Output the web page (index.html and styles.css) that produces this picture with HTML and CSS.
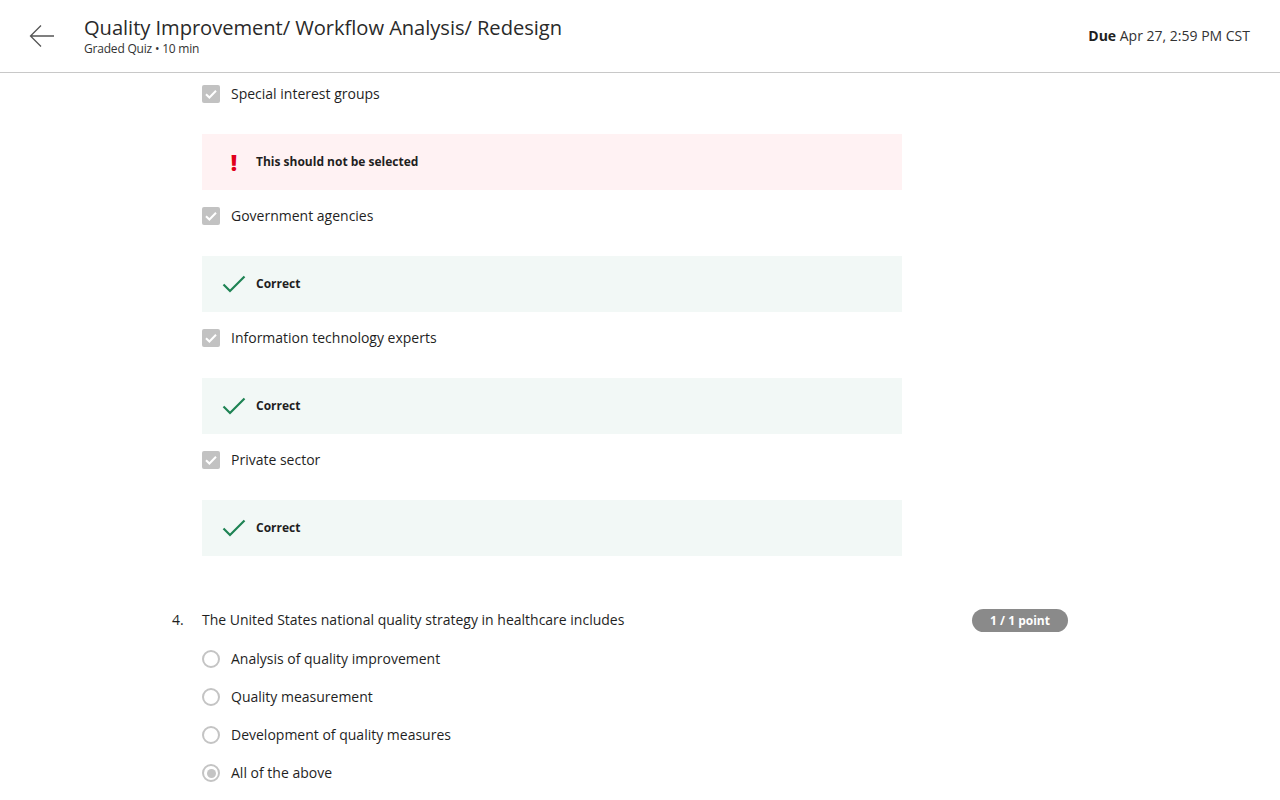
FILE: index.html
```html
<!DOCTYPE html>
<html lang="en">
<head>
<meta charset="utf-8">
<title>Quality Improvement/ Workflow Analysis/ Redesign</title>
<link rel="stylesheet" href="styles.css">
</head>
<body>
<header class="topbar">
  <button class="back" aria-label="Back">
    <svg width="26" height="24" viewBox="0 0 26 24"><path d="M25 12H2M12 1.5L1.5 12L12 22.5" fill="none" stroke="#555" stroke-width="1.3"/></svg>
  </button>
  <div class="title-block">
    <h1 class="title">Quality Improvement/ Workflow Analysis/ Redesign</h1>
    <div class="subtitle">Graded Quiz • 10 min</div>
  </div>
  <div class="due"><b>Due</b> Apr 27, 2:59 PM CST</div>
</header>

<main class="content">
  <div class="options">
    <div class="option">
      <span class="checkbox"><svg width="18" height="18" viewBox="0 0 18 18"><path d="M4 9.2L7.4 12.5L14 5.8" fill="none" stroke="#fff" stroke-width="2"/></svg></span>
      <span class="label">Special interest groups</span>
    </div>
    <div class="feedback wrong">
      <span class="fb-icon"><span class="excl">!</span></span>
      <span class="fb-text">This should not be selected</span>
    </div>

    <div class="option">
      <span class="checkbox"><svg width="18" height="18" viewBox="0 0 18 18"><path d="M4 9.2L7.4 12.5L14 5.8" fill="none" stroke="#fff" stroke-width="2"/></svg></span>
      <span class="label">Government agencies</span>
    </div>
    <div class="feedback right">
      <span class="fb-icon"><svg width="24" height="20" viewBox="0 0 24 20"><path d="M1.5 10.5L8 17L22.5 2.5" fill="none" stroke="#1f8354" stroke-width="2.2"/></svg></span>
      <span class="fb-text">Correct</span>
    </div>

    <div class="option">
      <span class="checkbox"><svg width="18" height="18" viewBox="0 0 18 18"><path d="M4 9.2L7.4 12.5L14 5.8" fill="none" stroke="#fff" stroke-width="2"/></svg></span>
      <span class="label">Information technology experts</span>
    </div>
    <div class="feedback right">
      <span class="fb-icon"><svg width="24" height="20" viewBox="0 0 24 20"><path d="M1.5 10.5L8 17L22.5 2.5" fill="none" stroke="#1f8354" stroke-width="2.2"/></svg></span>
      <span class="fb-text">Correct</span>
    </div>

    <div class="option">
      <span class="checkbox"><svg width="18" height="18" viewBox="0 0 18 18"><path d="M4 9.2L7.4 12.5L14 5.8" fill="none" stroke="#fff" stroke-width="2"/></svg></span>
      <span class="label">Private sector</span>
    </div>
    <div class="feedback right">
      <span class="fb-icon"><svg width="24" height="20" viewBox="0 0 24 20"><path d="M1.5 10.5L8 17L22.5 2.5" fill="none" stroke="#1f8354" stroke-width="2.2"/></svg></span>
      <span class="fb-text">Correct</span>
    </div>
  </div>

  <section class="question">
    <div class="q-head">
      <span class="q-num">4.</span>
      <span class="q-text">The United States national quality strategy in healthcare includes</span>
      <span class="badge">1 / 1 point</span>
    </div>
    <div class="radios">
      <div class="option"><span class="radio"></span><span class="label">Analysis of quality improvement</span></div>
      <div class="option"><span class="radio"></span><span class="label">Quality measurement</span></div>
      <div class="option"><span class="radio"></span><span class="label">Development of quality measures</span></div>
      <div class="option"><span class="radio checked"></span><span class="label">All of the above</span></div>
    </div>
  </section>
</main>
</body>
</html>
```

FILE: styles.css
```css
* { box-sizing: border-box; }
html, body { margin: 0; padding: 0; background: #fff; }
body {
  font-family: "Open Sans", "Liberation Sans", sans-serif;
  color: #1f1f1f;
}

.topbar {
  height: 73px;
  border-bottom: 1px solid #c8c8c8;
  display: flex;
  align-items: flex-start;
  padding: 0 30px 0 29px;
}
.back {
  border: 0;
  background: none;
  padding: 0;
  margin-top: 24px;
  width: 26px;
  height: 24px;
  display: flex;
  cursor: pointer;
}
.title-block {
  margin-left: 29px;
  padding-top: 13px;
  flex: 1;
}
.title {
  margin: 0;
  font-size: 20.15px;
  font-weight: 400;
  line-height: 28px;
  color: #2a2a2a;
  letter-spacing: -0.05px;
}
.subtitle {
  font-size: 12px;
  line-height: 16px;
  color: #333;
  letter-spacing: -0.2px;
}
.due {
  padding-top: 26px;
  font-size: 14px;
  line-height: 20px;
  color: #333;
}
.due b { font-weight: 700; color: #1f1f1f; }

.content {
  width: 896px;
  margin-left: 172px;
  padding-top: 9px;
}
.options { padding-left: 30px; }

.option {
  height: 24px;
  display: flex;
  align-items: center;
  gap: 11px;
  font-size: 14px;
  color: #1f1f1f;
}
.label { margin-top: -2px; }
.checkbox {
  width: 18px;
  height: 18px;
  border-radius: 2px;
  background: #c2c2c2;
  display: flex;
}
.feedback {
  width: 700px;
  height: 56px;
  margin: 28px 0 14px;
  display: flex;
  align-items: center;
  padding-left: 20px;
  gap: 10px;
}
.feedback.wrong { background: #fff2f3; }
.feedback.right { background: #f2f8f6; }
.fb-icon {
  width: 24px;
  display: flex;
  justify-content: center;
}
.excl {
  color: #e1001a;
  font-weight: 800;
  font-size: 22px;
  line-height: 22px;
}
.fb-text {
  font-size: 12px;
  font-weight: 700;
  color: #1f1f1f;
  margin-top: -2px;
}

.question { margin-top: 52px; }
.q-head {
  height: 24px;
  display: flex;
  align-items: center;
  font-size: 14px;
}
.q-num { width: 30px; margin-top: -2px; }
.q-text { flex: 1; margin-top: -2px; }
.badge {
  width: 96px;
  height: 23px;
  border-radius: 12px;
  background: #8a8a8a;
  color: #fff;
  font-size: 12px;
  font-weight: 700;
  display: flex;
  align-items: center;
  justify-content: center;
}
.radios {
  padding-left: 30px;
  margin-top: 15px;
  display: flex;
  flex-direction: column;
  gap: 14px;
}
.radio {
  width: 18px;
  height: 18px;
  border-radius: 50%;
  border: 2px solid #c4c4c4;
  display: flex;
  align-items: center;
  justify-content: center;
  background: #fff;
}
.radio.checked::after {
  content: "";
  width: 9px;
  height: 9px;
  border-radius: 50%;
  background: #c4c4c4;
}
```
